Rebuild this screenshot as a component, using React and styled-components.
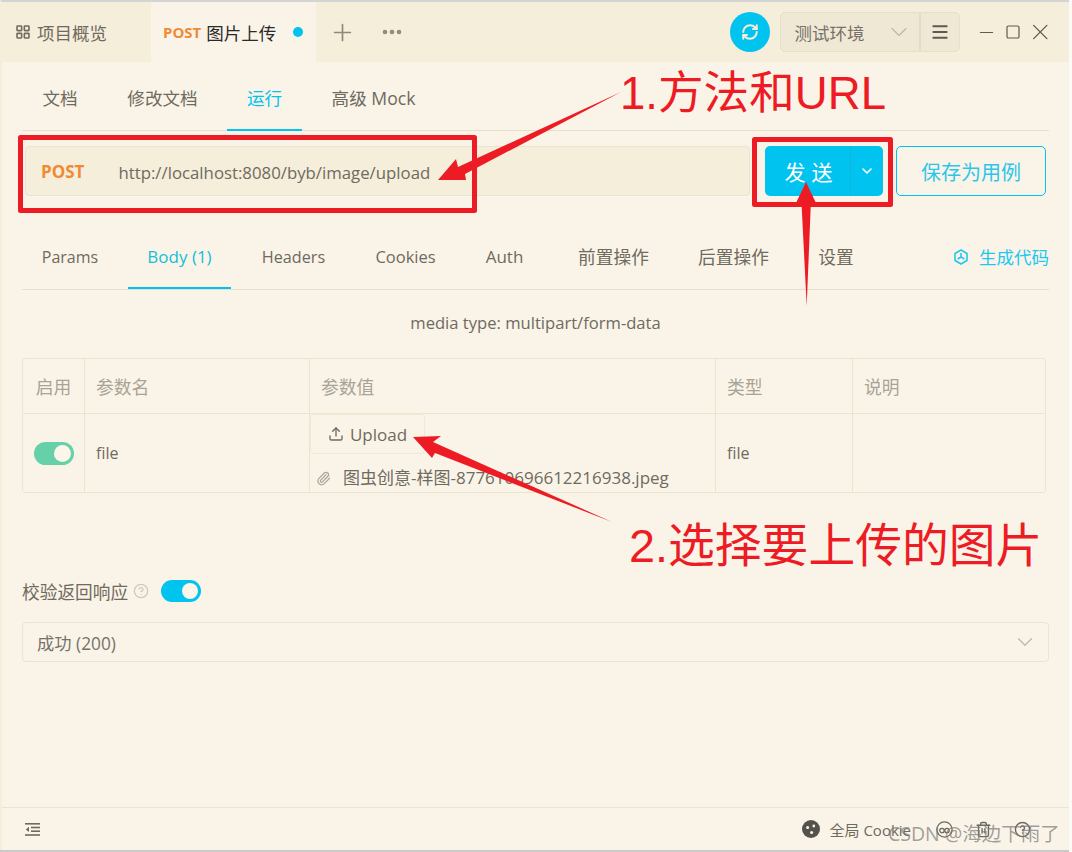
import React from "react";
import styled, { createGlobalStyle } from "styled-components";
import { LayoutGrid, Plus, Ellipsis, RefreshCw, ChevronDown, Menu, Minus, Square, X, Upload, Paperclip, CircleHelp, Trash2 } from "lucide-react";

const GlobalStyle = createGlobalStyle`
  html, body {
    margin: 0;
    height: 100%;
    background: #fff;
  }
  * {
    box-sizing: border-box;
  }
  #root {
    font-family: "Open Sans", "Noto Sans CJK SC", sans-serif;
  }
`;

const Page = styled.div`
  position: relative;
  width: 1072px;
  height: 852px;
  overflow: hidden;
  background: #fbfaf6;
`;

const AppWindow = styled.div`
  width: 1069px;
  height: 850px;
  display: flex;
  flex-direction: column;
  border-top: 2px solid #d4d4d4;
  border-left: 2px solid #f5eedb;
  background: #faf4e8;
  box-shadow: 0 2px 0 #c9c9c9;
`;

const TabBar = styled.div`
  height: 60px;
  flex: none;
  display: flex;
  align-items: center;
  background: #f5eedb;
`;

const OverviewTab = styled.div`
  width: 149px;
  height: 100%;
  padding-left: 13px;
  display: flex;
  align-items: center;
  gap: 6px;
  color: #6f6a5e;
  font-size: 17.5px;
`;

const ActiveTab = styled.div`
  width: 165px;
  height: 100%;
  padding-left: 12px;
  display: flex;
  align-items: center;
  background: #faf4e8;
  color: #2a2a2a;
  font-size: 17.5px;
`;

const Method = styled.span`
  color: #ef8a35;
  font-weight: 700;
  font-size: ${(p) => p.$size || 15}px;
  margin-right: ${(p) => p.$gap || 5}px;
`;

const Dot = styled.span`
  width: 10px;
  height: 10px;
  border-radius: 50%;
  background: #00c3f0;
  margin-left: 17px;
`;

const BarIcon = styled.span`
  display: flex;
  color: #8e897c;
  margin-left: ${(p) => p.$left}px;
`;

const TabBarRight = styled.div`
  margin-left: auto;
  display: flex;
  align-items: center;
  padding-right: 16px;
`;

const SyncButton = styled.div`
  width: 40px;
  height: 40px;
  border-radius: 50%;
  background: #00c3f0;
  color: #f5eedb;
  display: flex;
  align-items: center;
  justify-content: center;
`;

const EnvSelect = styled.div`
  width: 180px;
  height: 40px;
  margin-left: 10px;
  display: flex;
  border: 1px solid #e6dfcb;
  border-radius: 5px;
  background: #efe8d5;
  color: #6f6a5e;
  font-size: 17.5px;
`;

const EnvLabel = styled.div`
  flex: 1;
  display: flex;
  align-items: center;
  justify-content: space-between;
  padding: 0 6px 0 14px;
  color: #77716a;
  svg {
    color: #bdb7a8;
  }
`;

const EnvMenu = styled.div`
  width: 40px;
  display: flex;
  align-items: center;
  justify-content: center;
  border-left: 2px solid #e2dbc7;
  color: #5f5b52;
`;

const WindowButtons = styled.div`
  display: flex;
  align-items: center;
  margin-left: 14px;
  color: #5f5b52;
`;

const WindowButton = styled.span`
  width: 26.5px;
  display: flex;
  justify-content: center;
`;

const Content = styled.div`
  flex: 1;
  display: flex;
  flex-direction: column;
  min-height: 0;
  padding: 0 20px;
`;

const DocTabs = styled.div`
  height: 69px;
  flex: none;
  display: flex;
  border-bottom: 1px solid #e6dfcd;
  font-size: 17.6px;
  color: #6f6a5e;
`;

const DocTab = styled.div`
  width: ${(p) => p.$width}px;
  height: 69px;
  display: flex;
  align-items: center;
  justify-content: center;
  padding-top: 4px;
  color: ${(p) => (p.$active ? "#00c3f0" : "#6f6a5e")};
  border-bottom: 2px solid ${(p) => (p.$active ? "#00c3f0" : "transparent")};
`;

const RequestRow = styled.div`
  display: flex;
  align-items: center;
  margin-top: 15px;
  height: 50px;
`;

const UrlBar = styled.div`
  width: 725px;
  height: 50px;
  margin-left: 3px;
  display: flex;
  align-items: center;
  padding-left: 15px;
  border: 1px solid #ebe3d0;
  border-radius: 4px;
  background: #f5eedb;
  color: #6f6a5e;
  font-size: 16.8px;
`;

const UrlText = styled.span`
  white-space: nowrap;
  padding-top: 2px;
`;

const SendButton = styled.div`
  width: 118px;
  height: 50px;
  margin-left: 15px;
  display: flex;
  border-radius: 5px;
  background: #00c3f0;
  color: #fff;
  font-size: 21px;
`;

const SendLabel = styled.div`
  width: 86px;
  display: flex;
  align-items: center;
  justify-content: center;
  letter-spacing: 6px;
  padding-left: 8px;
  border-right: 1px solid #12b4dc;
`;

const SendCaret = styled.div`
  flex: 1;
  display: flex;
  align-items: center;
  justify-content: center;
`;

const SaveButton = styled.div`
  width: 150px;
  height: 50px;
  margin-left: 13px;
  display: flex;
  align-items: center;
  justify-content: center;
  border: 1px solid #00c3f0;
  border-radius: 5px;
  color: #2cc6ec;
  font-size: 20px;
`;

const BodyTabs = styled.div`
  margin-top: 34px;
  height: 60px;
  flex: none;
  display: flex;
  gap: 10px;
  align-items: flex-start;
  border-bottom: 1px solid #e6dfcd;
  color: #6f6a5e;
`;

const BodyTab = styled.div`
  height: 59px;
  width: ${(p) => p.$width}px;
  flex: none;
  display: flex;
  justify-content: center;
  padding-top: 15px;
  line-height: 24px;
  font-size: ${(p) => p.$size || 16.5}px;
  color: ${(p) => (p.$active ? "#12bfd8" : "#6f6a5e")};
  border-bottom: 2px solid ${(p) => (p.$active ? "#00c3f0" : "transparent")};
`;

const CodeLink = styled.div`
  margin-left: auto;
  padding-top: 15px;
  line-height: 24px;
  display: flex;
  gap: 10px;
  font-size: 17.5px;
  color: #22c7f0;
  svg {
    margin-top: 4px;
  }
`;

const MediaType = styled.div`
  height: 68px;
  flex: none;
  display: flex;
  align-items: center;
  justify-content: center;
  padding-bottom: 3px;
  color: #6f6a5e;
  font-size: 16.6px;
`;

const ParamTable = styled.div`
  width: 1024px;
  display: grid;
  grid-template-columns: 62px 225px 406px 137px 1fr;
  grid-template-rows: 55px 78px;
  border: 1px solid #ebe4cf;
  border-radius: 3px;
`;

const HeadCell = styled.div`
  display: flex;
  align-items: center;
  justify-content: ${(p) => (p.$center ? "center" : "flex-start")};
  padding-left: ${(p) => (p.$center ? 0 : 11)}px;
  color: #a8a395;
  font-size: 17.8px;
  border-bottom: 1px solid #ebe4cf;
  border-right: ${(p) => (p.$last ? "0" : "1px solid #ebe4cf")};
`;

const BodyCell = styled.div`
  display: flex;
  align-items: center;
  justify-content: ${(p) => (p.$center ? "center" : "flex-start")};
  padding-left: ${(p) => (p.$center ? 0 : 11)}px;
  color: #6f6a5e;
  font-size: 16px;
  border-right: ${(p) => (p.$last ? "0" : "1px solid #ebe4cf")};
`;

const UploadCell = styled.div`
  display: flex;
  flex-direction: column;
  overflow: hidden;
  border-right: 1px solid #ebe4cf;
  color: #6f6a5e;
`;

const UploadButton = styled.div`
  width: 115px;
  height: 40px;
  display: flex;
  align-items: center;
  justify-content: center;
  gap: 6px;
  border: 1px solid #efe9d8;
  border-radius: 4px;
  font-size: 17px;
`;

const FileRow = styled.div`
  margin-top: 12px;
  padding-left: 6px;
  display: flex;
  align-items: center;
  gap: 12px;
  font-size: 17px;
  line-height: 24px;
  white-space: nowrap;
  svg {
    color: #aaa597;
  }
`;

const Switch = styled.div`
  width: 40px;
  height: ${(p) => p.$height}px;
  display: flex;
  align-items: center;
  justify-content: flex-end;
  padding-right: 3px;
  border-radius: 12px;
  background: ${(p) => p.$color};
  &::after {
    content: "";
    width: ${(p) => p.$height - 6}px;
    height: ${(p) => p.$height - 6}px;
    border-radius: 50%;
    background: #faf6ea;
  }
`;

const ValidateRow = styled.div`
  margin-top: 88px;
  height: 20px;
  display: flex;
  align-items: center;
  color: #6f6a5e;
  font-size: 17.7px;
`;

const HelpIcon = styled.span`
  display: flex;
  margin: 0 12px 0 5px;
  color: #cfcabb;
`;

const ResponseSelect = styled.div`
  margin-top: 21px;
  height: 40px;
  flex: none;
  display: flex;
  align-items: center;
  justify-content: space-between;
  padding: 0 10px 0 14px;
  border: 1px solid #ebe4cf;
  border-radius: 4px;
  color: #77716a;
  font-size: 17.3px;
  svg {
    color: #bdb7a8;
  }
`;

const Footer = styled.div`
  height: 43px;
  flex: none;
  display: flex;
  align-items: center;
  padding: 0 38px 0 23px;
  border-top: 1px solid #ebe4d2;
  color: #6f6a5e;
  font-size: 15px;
`;

const FooterRight = styled.div`
  margin-left: auto;
  display: flex;
  align-items: center;
  gap: 10px;
`;

const FooterIcons = styled.div`
  display: flex;
  gap: 22px;
  margin-left: 15px;
  color: #6f6a5e;
`;

const Overlay = styled.svg`
  position: absolute;
  inset: 0;
  pointer-events: none;
`;

const Note = styled.div`
  position: absolute;
  left: ${(p) => p.$x}px;
  top: ${(p) => p.$y}px;
  color: #ed1c24;
  font-size: ${(p) => p.$size}px;
  line-height: 1;
  white-space: nowrap;
  font-family: "Liberation Sans", "Noto Sans CJK SC", sans-serif;
`;

const Watermark = styled.div`
  position: absolute;
  left: 888px;
  top: 818px;
  color: rgba(120, 120, 120, 0.7);
  font-size: 19.5px;
  white-space: nowrap;
`;

function CubeIcon() {
  return (
    <svg width="16" height="16" viewBox="0 0 16 16" fill="none" stroke="currentColor" strokeWidth="1.6">
      <path d="M8 1 14 4.5V11.5L8 15 2 11.5V4.5Z" strokeLinejoin="round" />
      <path d="M8 8V4M8 8 4.6 10M8 8 11.4 10" />
    </svg>
  );
}

function IndentIcon() {
  return (
    <svg width="15" height="13" viewBox="0 0 15 13" fill="#6f6a5e">
      <rect x="0" y="0" width="15" height="1.6" />
      <rect x="6" y="3.7" width="9" height="1.6" />
      <rect x="6" y="7.4" width="9" height="1.6" />
      <rect x="0" y="11.2" width="15" height="1.6" />
      <path d="M4 3.8V9L0.8 6.4Z" />
    </svg>
  );
}

function CookieIcon() {
  return (
    <svg width="18" height="18" viewBox="0 0 18 18">
      <circle cx="9" cy="9" r="9" fill="#55524b" />
      <circle cx="5.6" cy="7.6" r="1.5" fill="#faf4e8" />
      <circle cx="11.8" cy="6" r="1.4" fill="#faf4e8" />
      <circle cx="9.6" cy="12.6" r="1.5" fill="#faf4e8" />
    </svg>
  );
}

function SwirlIcon() {
  return (
    <svg width="17" height="17" viewBox="0 0 17 17" fill="none" stroke="currentColor" strokeWidth="1.3">
      <circle cx="8.5" cy="8.5" r="7.6" />
      <circle cx="6" cy="9.5" r="2.2" />
      <circle cx="11" cy="9.5" r="2.2" />
    </svg>
  );
}

export default function App() {
  return (
    <Page>
      <GlobalStyle />
      <AppWindow>
        <TabBar>
          <OverviewTab>
            <LayoutGrid size={16} strokeWidth={2.4} />
            项目概览
          </OverviewTab>
          <ActiveTab>
            <Method>POST</Method>
            图片上传
            <Dot />
          </ActiveTab>
          <BarIcon $left={13}>
            <Plus size={27} strokeWidth={1.5} />
          </BarIcon>
          <BarIcon $left={24}>
            <Ellipsis size={24} strokeWidth={2.6} />
          </BarIcon>
          <TabBarRight>
            <SyncButton>
              <RefreshCw size={18} strokeWidth={2.6} />
            </SyncButton>
            <EnvSelect>
              <EnvLabel>
                测试环境
                <ChevronDown size={28} strokeWidth={1} />
              </EnvLabel>
              <EnvMenu>
                <Menu size={20} strokeWidth={2.4} />
              </EnvMenu>
            </EnvSelect>
            <WindowButtons>
              <WindowButton>
                <Minus size={21} strokeWidth={1.4} />
              </WindowButton>
              <WindowButton>
                <Square size={16} strokeWidth={1.8} />
              </WindowButton>
              <WindowButton>
                <X size={28} strokeWidth={1.2} />
              </WindowButton>
            </WindowButtons>
          </TabBarRight>
        </TabBar>
        <Content>
          <DocTabs>
            <DocTab $width={76}>文档</DocTab>
            <DocTab $width={129}>修改文档</DocTab>
            <DocTab $width={75} $active>
              运行
            </DocTab>
            <DocTab $width={143}>高级 Mock</DocTab>
          </DocTabs>
          <RequestRow>
            <UrlBar>
              <Method $size={17} $gap={34}>
                POST
              </Method>
              <UrlText>http://localhost:8080/byb/image/upload</UrlText>
            </UrlBar>
            <SendButton>
              <SendLabel>发送</SendLabel>
              <SendCaret>
                <ChevronDown size={16} strokeWidth={2.4} />
              </SendCaret>
            </SendButton>
            <SaveButton>保存为用例</SaveButton>
          </RequestRow>
          <BodyTabs>
            <BodyTab $width={96} $size={16}>
              Params
            </BodyTab>
            <BodyTab $width={103} $size={17} $active>
              Body (1)
            </BodyTab>
            <BodyTab $width={105} $size={16.2}>
              Headers
            </BodyTab>
            <BodyTab $width={99}>Cookies</BodyTab>
            <BodyTab $width={79} $size={17}>
              Auth
            </BodyTab>
            <BodyTab $width={119} $size={17.7}>
              前置操作
            </BodyTab>
            <BodyTab $width={101} $size={17.7}>
              后置操作
            </BodyTab>
            <BodyTab $width={84} $size={17.7}>
              设置
            </BodyTab>
            <CodeLink>
              <CubeIcon />
              生成代码
            </CodeLink>
          </BodyTabs>
          <MediaType>media type: multipart/form-data</MediaType>
          <ParamTable>
            <HeadCell $center>启用</HeadCell>
            <HeadCell>参数名</HeadCell>
            <HeadCell>参数值</HeadCell>
            <HeadCell>类型</HeadCell>
            <HeadCell $last>说明</HeadCell>
            <BodyCell $center>
              <Switch $height={23} $color="#66d0a8" />
            </BodyCell>
            <BodyCell>file</BodyCell>
            <UploadCell>
              <UploadButton>
                <Upload size={16} />
                Upload
              </UploadButton>
              <FileRow>
                <Paperclip size={15} />
                图虫创意-样图-877610696612216938.jpeg
              </FileRow>
            </UploadCell>
            <BodyCell>file</BodyCell>
            <BodyCell $last />
          </ParamTable>
          <ValidateRow>
            校验返回响应
            <HelpIcon>
              <CircleHelp size={16} />
            </HelpIcon>
            <Switch $height={22} $color="#00c3f0" />
          </ValidateRow>
          <ResponseSelect>
            成功 (200)
            <ChevronDown size={26} strokeWidth={1.1} />
          </ResponseSelect>
        </Content>
        <Footer>
          <IndentIcon />
          <FooterRight>
            <CookieIcon />
            全局 Cookie
            <FooterIcons>
              <SwirlIcon />
              <Trash2 size={17} />
              <CircleHelp size={17} />
            </FooterIcons>
          </FooterRight>
        </Footer>
      </AppWindow>

      <Overlay width="1072" height="852" viewBox="0 0 1072 852">
        <g fill="none" stroke="#ed1c24" strokeWidth="5" strokeLinejoin="round">
          <rect x="20.5" y="137.5" width="454" height="73" />
          <rect x="754.5" y="139.5" width="136" height="65" />
        </g>
        <g fill="#ed1c24">
          <polygon points="621,92 465,174 466,180 438,180 456,159 458,167" />
          <polygon points="806.7,306 810.7,207 816,203 806,182 796,203 801.7,207" />
          <polygon points="612,522 435,453 432,458 413,437 441,436 433,442" />
        </g>
      </Overlay>
      <Note $x={620} $y={71} $size={45.6}>
        1.方法和URL
      </Note>
      <Note $x={629} $y={523} $size={46.8}>
        2.选择要上传的图片
      </Note>
      <Watermark>CSDN @海边下雨了</Watermark>
    </Page>
  );
}
